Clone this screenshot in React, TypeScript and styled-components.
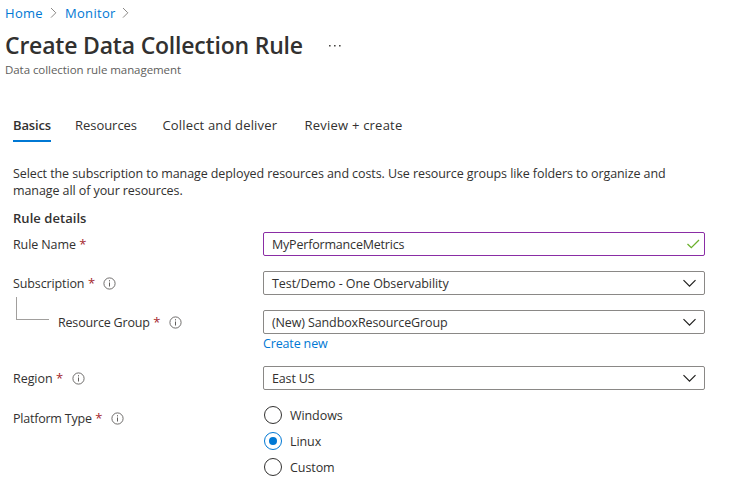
import React from 'react';
import styled, { createGlobalStyle, css } from 'styled-components';

const GlobalStyle = createGlobalStyle`
  *, *::before, *::after { box-sizing: border-box; }
  body {
    margin: 0;
    background: #fff;
    color: #323130;
    font: 12.5px/17px "Open Sans", "Noto Sans", sans-serif;
  }
  svg { display: block; flex: none; }
`;

const Page = styled.main`
  width: 731px;
  height: 492px;
  overflow: hidden;
  white-space: nowrap;
`;

const Text = styled.span<{ $track?: number }>`
  letter-spacing: ${({ $track = 0 }) => $track}px;
`;

const Header = styled.header`
  padding: 4px 0 0 5px;
`;

const Breadcrumb = styled.nav`
  display: flex;
  align-items: center;
  height: 18px;
  font-size: 13px;
`;

const Crumb = styled.a<{ $width: number }>`
  width: ${({ $width }) => $width}px;
  color: #0078d4;
  letter-spacing: 0.3px;
`;

const CrumbArrow = styled.svg`
  margin: 0 8px 0 7px;
`;

const TitleBar = styled.div`
  display: flex;
  align-items: center;
  height: 32px;
  margin-top: 7px;
`;

const Title = styled.h1`
  margin: 0;
  width: 324px;
  font-size: 23px;
  font-weight: 600;
  line-height: 32px;
  letter-spacing: -0.2px;
`;

const MoreIcon = styled.svg`
  margin-top: 2px;
`;

const Subtitle = styled.p`
  margin: 1px 0 0;
  font-size: 11.5px;
  line-height: 16px;
  letter-spacing: -0.06px;
  color: #605e5c;
`;

const Tabs = styled.div`
  display: flex;
  margin: 31px 0 0 13px;
`;

const Tab = styled.div<{ $width: number; $gap: number; $track: number; $active?: boolean }>`
  width: ${({ $width }) => $width}px;
  height: 33px;
  margin-right: ${({ $gap }) => $gap}px;
  font-size: 13px;
  line-height: 32px;
  letter-spacing: ${({ $track }) => $track}px;
  ${({ $active }) =>
    $active &&
    css`
      font-weight: 600;
      border-bottom: 2px solid #0078d4;
    `}
`;

const Content = styled.section`
  padding: 23px 0 0 13px;
`;

const Description = styled.p`
  margin: 0;
  letter-spacing: -0.085px;
`;

const SectionTitle = styled.h2`
  margin: 10px 0 5px;
  font-size: 13px;
  font-weight: 600;
  line-height: 18px;
  letter-spacing: 0.05px;
`;

const FormRow = styled.div<{ $space: number }>`
  display: grid;
  grid-template-columns: 250px 442px;
  align-items: start;
  margin-bottom: ${({ $space }) => $space}px;
`;

const Label = styled.div`
  display: flex;
  align-items: center;
  height: 24px;
`;

const Required = styled.span`
  width: 7px;
  margin-left: 3.5px;
  color: #a4262c;
  font-size: 13px;
`;

const InfoIcon = styled.svg`
  margin: 1px 0 0 8.5px;
`;

const Connector = styled.i`
  width: 33px;
  height: 23px;
  margin: -27px 9px 0 3px;
  border: solid #a19f9d;
  border-width: 0 0 1px 1px;
`;

const Field = styled.div<{ $valid?: boolean }>`
  display: flex;
  align-items: center;
  justify-content: space-between;
  height: 24px;
  padding: 0 ${({ $valid }) => ($valid ? 4 : 5)}px 0 8px;
  border: 1px solid ${({ $valid }) => ($valid ? '#8a2da5' : '#8a8886')};
  border-radius: 2px;
`;

const CreateLink = styled.a`
  display: block;
  margin-top: 1px;
  color: #0078d4;
  letter-spacing: -0.15px;
`;

const RadioGroup = styled.div`
  display: grid;
  grid-auto-rows: 26px;
  margin: -4px 0 0 1px;
`;

const Option = styled.div`
  display: flex;
  align-items: center;
  gap: 8px;
  letter-spacing: -0.08px;
`;

const Radio = styled.i<{ $checked?: boolean }>`
  display: grid;
  place-items: center;
  width: 18px;
  height: 18px;
  border: 1px solid ${({ $checked }) => ($checked ? '#0078d4' : '#323130')};
  border-radius: 50%;

  &::after {
    content: '';
    width: 8px;
    height: 8px;
    border-radius: 50%;
    background: ${({ $checked }) => ($checked ? '#0078d4' : 'transparent')};
  }
`;

function Chevron() {
  return (
    <CrumbArrow width="7" height="12" viewBox="0 0 7 12" fill="none" stroke="#8a8886">
      <path d="M1 1 5.8 5.8 1 10.6" />
    </CrumbArrow>
  );
}

function Info() {
  return (
    <InfoIcon width="13" height="13" viewBox="0 0 13 13" fill="none" stroke="#605e5c">
      <circle cx="6.5" cy="6.5" r="5.6" strokeWidth="0.9" />
      <path d="M6.5 5.5v4M6.5 3.2v1.2" />
    </InfoIcon>
  );
}

function FieldLabel({ text, track, info = true }: { text: string; track?: number; info?: boolean }) {
  return (
    <>
      <Text $track={track}>{text}</Text>
      <Required>*</Required>
      {info && <Info />}
    </>
  );
}

function Select({ value, track }: { value: string; track: number }) {
  return (
    <Field>
      <Text $track={track}>{value}</Text>
      <svg width="18" height="12" viewBox="0 0 18 12" fill="none" stroke="#201f1e" strokeWidth="1.2">
        <path d="M2.5 3.2 8.5 9.2l6-6" />
      </svg>
    </Field>
  );
}

export default function App() {
  return (
    <Page>
      <GlobalStyle />
      <Header>
        <Breadcrumb>
          <Crumb $width={38}>Home</Crumb>
          <Chevron />
          <Crumb $width={50}>Monitor</Crumb>
          <Chevron />
        </Breadcrumb>
        <TitleBar>
          <Title>Create Data Collection Rule</Title>
          <MoreIcon width="12" height="2" viewBox="0 0 12 2" fill="#484644">
            <path d="M0 0h1.6v1.5H0zM5 0h1.6v1.5H5zM10 0h1.6v1.5H10z" />
          </MoreIcon>
        </TitleBar>
        <Subtitle>Data collection rule management</Subtitle>
      </Header>
      <Tabs>
        <Tab $active $width={38} $gap={24} $track={-0.13}>Basics</Tab>
        <Tab $width={62} $gap={25.5} $track={-0.04}>Resources</Tab>
        <Tab $width={115} $gap={27} $track={0.16}>Collect and deliver</Tab>
        <Tab $width={98} $gap={0} $track={0.22}>Review + create</Tab>
      </Tabs>
      <Content>
        <Description>
          Select the subscription to manage deployed resources and costs. Use resource groups like folders to organize and
          <br />
          manage all of your resources.
        </Description>
        <SectionTitle>Rule details</SectionTitle>
        <FormRow $space={15}>
          <Label><FieldLabel text="Rule Name" track={-0.1} info={false} /></Label>
          <Field $valid>
            <Text $track={-0.19}>MyPerformanceMetrics</Text>
            <svg width="13" height="10" viewBox="0 0 13 10" fill="none" stroke="#6bb02c" strokeWidth="1.3">
              <path d="M.5 5 4.3 8.7 12 1" />
            </svg>
          </Field>
        </FormRow>
        <FormRow $space={15}>
          <Label><FieldLabel text="Subscription" track={-0.12} /></Label>
          <Select value="Test/Demo - One Observability" track={-0.07} />
        </FormRow>
        <FormRow $space={14}>
          <Label>
            <Connector />
            <FieldLabel text="Resource Group" track={-0.18} />
          </Label>
          <div>
            <Select value="(New) SandboxResourceGroup" track={-0.12} />
            <CreateLink>Create new</CreateLink>
          </div>
        </FormRow>
        <FormRow $space={16}>
          <Label><FieldLabel text="Region" track={-0.05} /></Label>
          <Select value="East US" track={-0.15} />
        </FormRow>
        <FormRow $space={0}>
          <Label><FieldLabel text="Platform Type" track={-0.22} /></Label>
          <RadioGroup>
            <Option><Radio />Windows</Option>
            <Option><Radio $checked />Linux</Option>
            <Option><Radio />Custom</Option>
          </RadioGroup>
        </FormRow>
      </Content>
    </Page>
  );
}
